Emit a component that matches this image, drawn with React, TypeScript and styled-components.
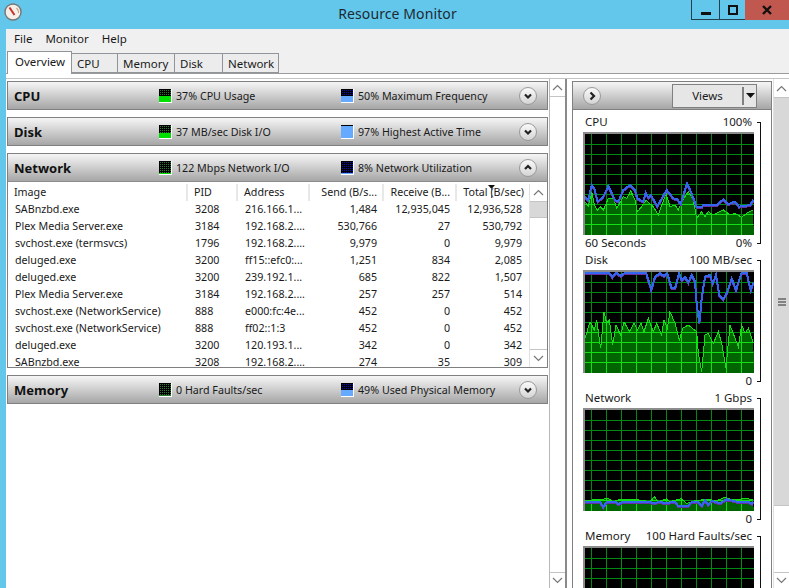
import React from 'react';
import styled, { createGlobalStyle } from 'styled-components';

const Global = createGlobalStyle`
  html, body { margin: 0; padding: 0; width: 789px; height: 588px; overflow: hidden; }
  body { font-family: "Noto Sans", "Liberation Sans", sans-serif; font-size: 10.7px; color: #1a1a1a; }
`;

const Screen = styled.div`
  width: 789px; height: 588px; background: #63c7ec; display: flex; flex-direction: column; overflow: hidden;
`;
const TitleBar = styled.header`
  height: 29px; flex: none; display: grid; grid-template-columns: 1fr auto 1fr;
`;
const AppIcon = styled.svg`
  width: 18px; height: 18px; margin: 3px 0 0 4px;
`;
const TitleText = styled.div`
  font-size: 14px; line-height: 28px; color: #1c2a33; letter-spacing: 0.1px; padding-left: 6px;
`;
const WindowControls = styled.div`
  justify-self: end; display: flex; align-items: flex-start; height: 20px;
`;
const ControlButton = styled.div<{ $w: number; $close?: boolean }>`
  width: ${p => p.$w}px; height: 20px; box-sizing: border-box; display: flex; align-items: center; justify-content: center;
  background: ${p => (p.$close ? '#c0584f' : 'transparent')};
  border-left: ${p => (p.$close ? 'none' : '1px solid #23404f')};
  border-bottom: ${p => (p.$close ? 'none' : '1px solid #23404f')};
  svg { display: block; }
`;
const Window = styled.div`
  flex: 1; min-height: 0; margin-left: 6px; background: #fff; display: flex; flex-direction: column;
`;
const MenuBar = styled.nav`
  height: 22px; flex: none; box-sizing: border-box; padding: 0 0 4px 8px; background: #f0f0f0; display: flex; align-items: center; gap: 13px; font-size: 11.5px;
`;
const MenuItem = styled.span``;
const TabStrip = styled.div`
  height: 22px; flex: none; background: #f0f0f0; border-bottom: 1px solid #9a9a9a; display: flex; align-items: flex-end; padding-left: 1px;
`;
const Tab = styled.div<{ $w: number; $active?: boolean }>`
  width: ${p => p.$w}px; box-sizing: border-box; height: ${p => (p.$active ? 23 : 20)}px;
  margin-bottom: ${p => (p.$active ? -1 : 0)}px;
  background: ${p => (p.$active ? '#fff' : '#ececec')};
  border: 1px solid #8f959b; border-bottom: ${p => (p.$active ? 'none' : '1px solid #8f959b')};
  border-left: ${p => (p.$active ? '1px solid #8f959b' : 'none')};
  padding-left: ${p => (p.$active ? 7 : 5)}px; line-height: 19px; font-size: 11.5px;
`;
const Gap = styled.div`
  height: 4px; flex: none; background: #fff; border-bottom: 1px solid #c4c4c4;
`;
const Body = styled.div`
  flex: 1; min-height: 0; display: flex; background: #fff;
`;
const LeftPane = styled.main`
  width: 543px; flex: none; padding: 2px 0 0 1px; box-sizing: border-box; display: flex; flex-direction: column; gap: 7px;
`;
const Section = styled.section`
  width: 541px; box-sizing: border-box; border: 1px solid #808080;
`;
const SectionHeader = styled.div`
  height: 27px; box-sizing: border-box; background: linear-gradient(#f6f6f6, #a6a6a6); display: flex; align-items: center; padding-left: 6px;
`;
const SectionTitle = styled.h2`
  margin: 0; width: 145px; flex: none; font-size: 13px; font-weight: 700; color: #111; font-family: "Noto Sans", sans-serif;
`;
const Stat = styled.div<{ $w?: number }>`
  display: flex; align-items: center; gap: 4px; width: ${p => p.$w ?? 182}px; flex: none; white-space: nowrap;
`;
const Spacer = styled.div`
  flex: 1;
`;
const RoundButton = styled.div<{ $m?: number }>`
  width: 18px; height: 18px; border-radius: 50%; box-sizing: border-box; border: 1px solid #9a9a9a; flex: none;
  background: linear-gradient(#fafafa, #d4d4d4); display: flex; align-items: center; justify-content: center;
  margin: 0 ${p => p.$m ?? 10}px 0 0;
`;
const Table = styled.div`
  display: flex; height: 186px; box-sizing: border-box; background: #fff; border-top: 1px solid #8c8c8c; padding-top: 2px;
`;
const TableMain = styled.div`
  width: 521px; flex: none; overflow: hidden;
`;
const HeaderRow = styled.div`
  display: grid; grid-template-columns: 180px 50px 72px 74px 73px 72px; height: 17px; position: relative;
`;
const HeaderCell = styled.div<{ $right?: boolean }>`
  line-height: 17px; padding: 0 ${p => (p.$right ? 5 : 6)}px; text-align: ${p => (p.$right ? 'right' : 'left')};
  border-right: 2px solid #e8e8e8; white-space: nowrap; overflow: hidden; &:last-of-type { border-right: none; }
`;
const SortMark = styled.svg`
  position: absolute; left: 480px; top: 1px;
`;
const Row = styled.div`
  display: grid; grid-template-columns: 180px 50px 72px 74px 73px 72px; height: 17px; line-height: 17px;
`;
const Cell = styled.div<{ $right?: boolean }>`
  padding: 0 ${p => (p.$right ? 7 : 6)}px 0 ${p => (p.$right ? 0 : 7)}px; text-align: ${p => (p.$right ? 'right' : 'left')};
  white-space: nowrap; overflow: hidden;
`;
const VScroll = styled.div<{ $w: number; $bar?: boolean }>`
  width: ${p => p.$w}px; flex: none; box-sizing: border-box; display: flex; flex-direction: column; background: #fff;
  border-left: 1px solid ${p => (p.$bar ? '#b8b8b8' : '#e0e0e0')};
  border-right: ${p => (p.$bar ? '2px solid #8a8a8a' : 'none')};
`;
const ScrollArrow = styled.div<{ $h?: number }>`
  height: ${p => p.$h ?? 17}px; flex: none; display: flex; align-items: center; justify-content: center; box-sizing: border-box;
`;
const ScrollThumb = styled.div<{ $h: number }>`
  height: ${p => p.$h}px; flex: none; background: #d8d8d8; border-top: 1px solid #c4c4c4; border-bottom: 1px solid #c4c4c4; box-sizing: border-box;
  display: flex; align-items: center; justify-content: center;
`;
const ScrollTrack = styled.div<{ $line?: boolean }>`
  flex: 1; min-height: 0; border-top: ${p => (p.$line ? '1px solid #c4c4c4' : 'none')}; border-bottom: 1px solid #c4c4c4;
`;
const RightGutter = styled.div<{ $w: number }>`
  width: ${p => p.$w}px; flex: none;
`;
const RightPanel = styled.aside`
  width: 200px; flex: none; box-sizing: border-box; margin-top: 2px; border: 1px solid #808080; border-bottom: none; background: #fff;
`;
const RightHeader = styled.div`
  height: 28px; box-sizing: border-box; background: linear-gradient(#f6f6f6, #a6a6a6); display: flex; align-items: center; padding-left: 10px; border-bottom: 1px solid #808080;
`;
const ViewsButton = styled.div`
  margin-left: 71px; width: 85px; height: 24px; box-sizing: border-box; border: 1px solid #808080; background: #e6e6e6; display: flex; align-items: stretch; font-size: 11.5px;
`;
const ViewsLabel = styled.div`
  flex: 1; text-align: center; border-right: 2px solid #808080; margin: 2px 0; line-height: 18px;
`;
const ViewsArrow = styled.div`
  width: 12px; display: flex; align-items: center; justify-content: center;
`;
const GraphList = styled.div`
  padding-top: 4px;
`;
const GraphBlock = styled.div`
  display: flex; margin-left: 10px; height: 138px;
`;
const GraphColumn = styled.div`
  width: 171px; flex: none;
`;
const LabelRow = styled.div`
  height: 18px; box-sizing: border-box; display: flex; justify-content: space-between; align-items: center; padding: 0 2px 3px; font-size: 11.5px; white-space: nowrap;
`;
const GraphSvg = styled.svg`
  display: block; width: 171px; height: 103px;
`;
const Bracket = styled.div`
  width: 4px; box-sizing: border-box; margin: 8px 0 8px 3px; height: 122px; border: 1px solid #111; border-left: none;
`;
const Panels = styled.div`
  display: flex; flex-direction: column;
`;

type Pt = number[][];

function Graph({ id, y0, blue, green }: { id: string; y0: number; blue?: Pt; green?: Pt }) {
  const conv = (p: Pt) => p.map(([x, y]) => [(x - 69) / 3, (y - y0) / 3]);
  const str = (p: Pt, dy = 0) => p.map(([x, y]) => `${x.toFixed(2)},${(y + dy).toFixed(2)}`).join(' ');
  const xs = Array.from({ length: 11 }, (_, i) => 8 + 15 * i);
  const ys = Array.from({ length: 9 }, (_, i) => 12 + 10 * i);
  const grid = (color: string) => (
    <g fill={color}>
      {xs.map(x => <rect key={x} x={x} y={0} width={1} height={103} />)}
      {ys.map(y => <rect key={y} x={0} y={y} width={171} height={1} />)}
    </g>
  );
  const g = green ? conv(green) : null;
  const b = blue ? conv(blue) : null;
  const area = g ? `0,103 ${str(g)} 171,103` : '';
  return (
    <GraphSvg viewBox="0 0 171 103" shapeRendering="crispEdges">
      <rect width={171} height={103} fill="#000" />
      {grid('#008a14')}
      {g && (
        <>
          <clipPath id={id}><polygon points={area} /></clipPath>
          <polygon points={area} fill="#006400" />
          <g clipPath={`url(#${id})`}>{grid('#12e012')}</g>
          <polyline points={str(g)} fill="none" stroke="#12e012" strokeWidth={1} />
        </>
      )}
      {b && (
        <>
          <polyline points={str(b, 1)} fill="none" stroke="#6a2fa0" strokeWidth={2} />
          <polyline points={str(b)} fill="none" stroke="#3366ee" strokeWidth={2} />
        </>
      )}
      <rect width={171} height={2} fill="#8c8c8c" />
      <rect width={2} height={103} fill="#8c8c8c" />
    </GraphSvg>
  );
}

const cpuBlue: Pt = [[75,590],[85,600],[95,555],[103,565],[113,605],[130,590],[145,558],[165,600],[175,605],[190,570],[210,555],[225,570],[232,595],[250,605],[257,578],[265,592],[272,585],[292,618],[320,570],[340,595],[352,598],[362,612],[381,550],[395,580],[410,622],[425,622],[430,615],[470,615],[490,598],[505,612],[525,605],[537,620],[570,615],[580,600]];
const cpuGreen: Pt = [[75,605],[85,618],[95,575],[103,615],[113,632],[120,620],[130,630],[145,595],[160,595],[170,625],[190,590],[200,595],[212,572],[225,600],[232,635],[245,620],[258,600],[268,610],[280,620],[295,645],[318,580],[330,620],[345,615],[355,630],[365,605],[385,575],[400,600],[410,655],[425,635],[435,650],[445,635],[460,645],[490,630],[510,645],[525,640],[545,652],[560,640],[578,630]];
const diskBlue: Pt = [[75,98],[148,98],[157,112],[168,98],[183,108],[195,98],[258,98],[265,120],[274,150],[285,110],[300,100],[312,108],[322,100],[335,145],[345,145],[357,100],[365,120],[375,110],[385,128],[395,105],[405,125],[410,190],[418,250],[425,175],[435,110],[450,105],[458,130],[468,105],[478,165],[490,178],[500,160],[515,115],[528,150],[545,98],[560,98],[572,150],[580,128]];
const diskGreen: Pt = [[75,295],[90,245],[103,270],[110,240],[122,325],[132,215],[140,250],[148,240],[158,315],[168,255],[182,285],[192,245],[208,275],[222,250],[232,270],[243,250],[252,275],[265,235],[280,275],[290,250],[305,285],[312,240],[322,265],[330,215],[345,250],[358,300],[368,265],[385,255],[410,275],[415,340],[425,395],[435,285],[445,280],[460,310],[475,275],[485,310],[498,385],[510,255],[535,320],[545,255],[555,280],[565,265],[580,310]];
const netBlue: Pt = [[75,305],[120,305],[130,322],[140,305],[165,305],[175,312],[190,305],[270,305],[280,310],[300,305],[315,310],[345,305],[355,318],[385,318],[395,305],[415,305],[425,318],[435,300],[445,315],[455,302],[480,310],[500,298],[530,305],[565,305],[575,312],[580,305]];
const netGreen: Pt = [[75,302],[120,298],[145,296],[160,305],[180,298],[225,298],[270,305],[283,290],[295,305],[320,296],[330,305],[365,296],[380,310],[405,302],[440,298],[470,302],[495,292],[520,300],[560,295],[578,300]];

function Meter({ fill, bottom, dot }: { fill: string; bottom: number; dot: string }) {
  const h = 13 - bottom;
  const dots = [];
  for (let y = 1; y < h; y += 2) for (let x = 1; x < 12; x += 2) dots.push(<rect key={`${x}-${y}`} x={x} y={y} width={1} height={1} fill={dot} />);
  return (
    <svg width={13} height={14} viewBox="0 0 13 14" shapeRendering="crispEdges" style={{ flex: 'none' }}>
      <rect width={13} height={14} fill="#fff" />
      <rect width={12} height={h} fill="#000" />
      <g>{dots}</g>
      <rect y={h} width={12} height={bottom} fill={fill} />
    </svg>
  );
}

const GREEN = '#00e000';
const BLUE = '#66aaff';
const DG = '#2c7a2c';
const DB = '#0c0cc0';

const Chevron = ({ dir }: { dir: 'up' | 'down' | 'right' }) => {
  const d = dir === 'up' ? 'M3 7 L6 4 L9 7' : dir === 'down' ? 'M3 4.5 L6 7.5 L9 4.5' : 'M4.5 2.5 L8 6 L4.5 9.5';
  return <svg width={12} height={12} viewBox="0 0 12 12"><path d={d} fill="none" stroke="#222" strokeWidth={2.2} /></svg>;
};
const ThinArrow = ({ up }: { up?: boolean }) => (
  <svg width={11} height={7} viewBox="0 0 11 7"><path d={up ? 'M1 6 L5.5 1.5 L10 6' : 'M1 1 L5.5 5.5 L10 1'} fill="none" stroke="#777" strokeWidth={1.2} /></svg>
);

const headers: [string, boolean][] = [['Image', false], ['PID', false], ['Address', false], ['Send (B/s...', true], ['Receive (B...', true], ['Total (B/sec)', true]];
const rows = [
  ['SABnzbd.exe', '3208', '216.166.1...', '1,484', '12,935,045', '12,936,528'],
  ['Plex Media Server.exe', '3184', '192.168.2....', '530,766', '27', '530,792'],
  ['svchost.exe (termsvcs)', '1796', '192.168.2....', '9,979', '0', '9,979'],
  ['deluged.exe', '3200', 'ff15::efc0:...', '1,251', '834', '2,085'],
  ['deluged.exe', '3200', '239.192.1...', '685', '822', '1,507'],
  ['Plex Media Server.exe', '3184', '192.168.2....', '257', '257', '514'],
  ['svchost.exe (NetworkService)', '888', 'e000:fc:4e...', '452', '0', '452'],
  ['svchost.exe (NetworkService)', '888', 'ff02::1:3', '452', '0', '452'],
  ['deluged.exe', '3200', '120.193.1...', '342', '0', '342'],
  ['SABnzbd.exe', '3208', '192.168.2....', '274', '35', '309'],
];

const tabs: [string, number][] = [['Overview', 65], ['CPU', 46], ['Memory', 57], ['Disk', 48], ['Network', 56]];

function Header({ title, a, b, dir }: { title: string; a: [string, React.ReactNode]; b: [string, React.ReactNode]; dir: 'up' | 'down' }) {
  return (
    <SectionHeader>
      <SectionTitle>{title}</SectionTitle>
      <Stat>{a[1]}{a[0]}</Stat>
      <Stat $w={150}>{b[1]}{b[0]}</Stat>
      <Spacer />
      <RoundButton><Chevron dir={dir} /></RoundButton>
    </SectionHeader>
  );
}

export default function App() {
  return (
    <Screen>
      <Global />
      <TitleBar>
        <AppIcon viewBox="0 0 18 18">
          <circle cx={9} cy={9} r={8} fill="#f4efe9" stroke="#777" strokeWidth={1.4} />
          <path d="M5.5 4.5 L10.5 12" stroke="#c9302c" strokeWidth={2} />
          <path d="M12.5 5 A6 6 0 0 1 14.5 10" stroke="#c9a07a" fill="none" strokeWidth={1.2} />
        </AppIcon>
        <TitleText>Resource Monitor</TitleText>
        <WindowControls>
          <ControlButton $w={28}><svg width={10} height={10} viewBox="0 0 10 10"><rect x={0} y={7} width={10} height={3} fill="#111" /></svg></ControlButton>
          <ControlButton $w={26}><svg width={10} height={10} viewBox="0 0 10 10"><rect x={1} y={1} width={8} height={8} fill="none" stroke="#111" strokeWidth={2} /></svg></ControlButton>
          <ControlButton $w={44} $close><svg width={10} height={10} viewBox="0 0 10 10"><path d="M1 1 L9 9 M9 1 L1 9" stroke="#111" strokeWidth={2.4} /></svg></ControlButton>
        </WindowControls>
      </TitleBar>
      <Window>
        <MenuBar>
          <MenuItem>File</MenuItem>
          <MenuItem>Monitor</MenuItem>
          <MenuItem>Help</MenuItem>
        </MenuBar>
        <TabStrip>
          {tabs.map(([t, w], i) => <Tab key={t} $w={w} $active={i === 0}>{t}</Tab>)}
        </TabStrip>
        <Gap />
        <Body>
          <LeftPane>
            <Section>
              <Header title="CPU" dir="down"
                a={['37% CPU Usage', <Meter fill={GREEN} bottom={6} dot={DG} />]}
                b={['50% Maximum Frequency', <Meter fill={BLUE} bottom={6} dot={DB} />]} />
            </Section>
            <Section>
              <Header title="Disk" dir="down"
                a={['37 MB/sec Disk I/O', <Meter fill={GREEN} bottom={5} dot={DG} />]}
                b={['97% Highest Active Time', <Meter fill={BLUE} bottom={12} dot={DB} />]} />
            </Section>
            <Section>
              <Header title="Network" dir="up"
                a={['122 Mbps Network I/O', <Meter fill={GREEN} bottom={1} dot={DG} />]}
                b={['8% Network Utilization', <Meter fill={BLUE} bottom={1} dot={DB} />]} />
              <Table>
                <TableMain>
                  <HeaderRow>
                    {headers.map(([h, r]) => <HeaderCell key={h} $right={r}>{h}</HeaderCell>)}
                    <SortMark width={7} height={13} viewBox="0 0 7 13"><path d="M0 0 H7 L3.5 4 Z" fill="#111" /><path d="M3.5 4 V13" stroke="#555" /></SortMark>
                  </HeaderRow>
                  {rows.map((r, i) => (
                    <Row key={i}>
                      {r.map((c, j) => <Cell key={j} $right={j > 2}>{c}</Cell>)}
                    </Row>
                  ))}
                </TableMain>
                <VScroll $w={18}>
                  <ScrollArrow><ThinArrow up /></ScrollArrow>
                  <ScrollThumb $h={17} />
                  <ScrollTrack />
                  <ScrollArrow><ThinArrow /></ScrollArrow>
                </VScroll>
              </Table>
            </Section>
            <Section>
              <Header title="Memory" dir="down"
                a={['0 Hard Faults/sec', <Meter fill={DG} bottom={1} dot={DG} />]}
                b={['49% Used Physical Memory', <Meter fill={BLUE} bottom={6} dot={DB} />]} />
            </Section>
          </LeftPane>
          <VScroll $w={18} $bar>
            <ScrollArrow><ThinArrow up /></ScrollArrow>
            <ScrollTrack $line />
            <ScrollArrow $h={15}><ThinArrow /></ScrollArrow>
          </VScroll>
          <RightGutter $w={5} />
          <Panels>
            <RightPanel>
              <RightHeader>
                <RoundButton $m={0}><Chevron dir="right" /></RoundButton>
                <ViewsButton>
                  <ViewsLabel>Views</ViewsLabel>
                  <ViewsArrow><svg width={9} height={5} viewBox="0 0 9 5"><path d="M0 0 H9 L4.5 5 Z" fill="#111" /></svg></ViewsArrow>
                </ViewsButton>
              </RightHeader>
              <GraphList>
                <GraphBlock>
                  <GraphColumn>
                    <LabelRow><span>CPU</span><span>100%</span></LabelRow>
                    <Graph id="g1" y0={396} blue={cpuBlue} green={cpuGreen} />
                    <LabelRow><span>60 Seconds</span><span>0%</span></LabelRow>
                  </GraphColumn>
                  <Bracket />
                </GraphBlock>
                <GraphBlock>
                  <GraphColumn>
                    <LabelRow><span>Disk</span><span>100 MB/sec</span></LabelRow>
                    <Graph id="g2" y0={90} blue={diskBlue} green={diskGreen} />
                    <LabelRow><span /><span>0</span></LabelRow>
                  </GraphColumn>
                  <Bracket />
                </GraphBlock>
                <GraphBlock>
                  <GraphColumn>
                    <LabelRow><span>Network</span><span>1 Gbps</span></LabelRow>
                    <Graph id="g3" y0={24} blue={netBlue} green={netGreen} />
                    <LabelRow><span /><span>0</span></LabelRow>
                  </GraphColumn>
                  <Bracket />
                </GraphBlock>
                <GraphBlock>
                  <GraphColumn>
                    <LabelRow><span>Memory</span><span>100 Hard Faults/sec</span></LabelRow>
                    <Graph id="g4" y0={438} />
                  </GraphColumn>
                  <Bracket />
                </GraphBlock>
              </GraphList>
            </RightPanel>
          </Panels>
          <RightGutter $w={1} />
          <VScroll $w={16}>
            <ScrollArrow $h={18}><ThinArrow up /></ScrollArrow>
            <ScrollThumb $h={409}>
              <svg width={8} height={8} viewBox="0 0 8 8"><path d="M0 1 H8 M0 4 H8 M0 7 H8" stroke="#666" strokeWidth={1.4} /></svg>
            </ScrollThumb>
            <ScrollTrack />
            <ScrollArrow $h={15}><ThinArrow /></ScrollArrow>
          </VScroll>
        </Body>
      </Window>
    </Screen>
  );
}
